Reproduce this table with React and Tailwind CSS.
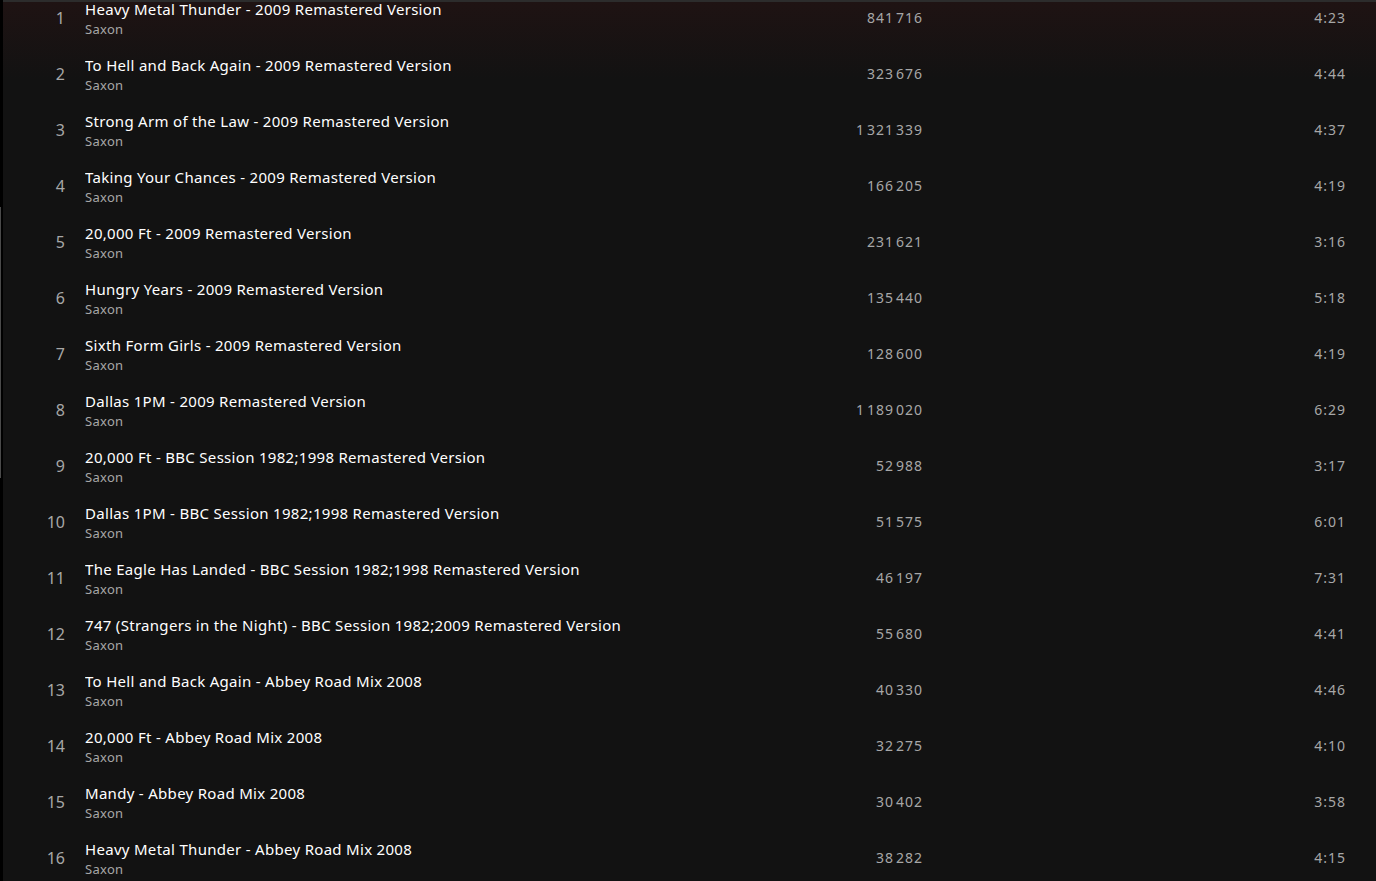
const tracks = [
  ["Heavy Metal Thunder - 2009 Remastered Version", ["841", "716"], "4:23"],
  ["To Hell and Back Again - 2009 Remastered Version", ["323", "676"], "4:44"],
  ["Strong Arm of the Law - 2009 Remastered Version", ["1", "321", "339"], "4:37"],
  ["Taking Your Chances - 2009 Remastered Version", ["166", "205"], "4:19"],
  ["20,000 Ft - 2009 Remastered Version", ["231", "621"], "3:16"],
  ["Hungry Years - 2009 Remastered Version", ["135", "440"], "5:18"],
  ["Sixth Form Girls - 2009 Remastered Version", ["128", "600"], "4:19"],
  ["Dallas 1PM - 2009 Remastered Version", ["1", "189", "020"], "6:29"],
  ["20,000 Ft - BBC Session 1982;1998 Remastered Version", ["52", "988"], "3:17"],
  ["Dallas 1PM - BBC Session 1982;1998 Remastered Version", ["51", "575"], "6:01"],
  ["The Eagle Has Landed - BBC Session 1982;1998 Remastered Version", ["46", "197"], "7:31"],
  ["747 (Strangers in the Night) - BBC Session 1982;2009 Remastered Version", ["55", "680"], "4:41"],
  ["To Hell and Back Again - Abbey Road Mix 2008", ["40", "330"], "4:46"],
  ["20,000 Ft - Abbey Road Mix 2008", ["32", "275"], "4:10"],
  ["Mandy - Abbey Road Mix 2008", ["30", "402"], "3:58"],
  ["Heavy Metal Thunder - Abbey Road Mix 2008", ["38", "282"], "4:15"],
];

export default function App() {
  return (
    <div
      className="flex h-[881px] w-[1376px] overflow-hidden bg-[#121212]"
      style={{ fontFamily: '"Noto Sans", "Liberation Sans", sans-serif' }}
    >
      <div className="flex w-[3px] shrink-0 flex-col bg-black">
        <div className="h-[207px]" />
        <div className="h-[271px] w-[1px] bg-[#4a4a4a]" />
      </div>
      <div className="flex min-w-0 flex-1 flex-col overflow-hidden bg-[linear-gradient(to_bottom,#1f1313_0px,#121212_80px)]">
        <div className="relative z-10 h-[2px] shrink-0 bg-[#2c2c2c]" />
        <div className="-mt-[12px] flex flex-col">
          {tracks.map(([title, plays, dur], i) => (
            <div
              key={i}
              className="grid h-[56px] shrink-0 grid-cols-[62px_minmax(0,1fr)_222px_423px] items-center pr-[30px]"
            >
              <div className="text-right text-[16px] text-[#a7a7a7]">{i + 1}</div>
              <div className="flex min-w-0 flex-col pl-[20px]">
                <div className="truncate text-[15px] leading-[20px] tracking-[0.3px] text-white">{title}</div>
                <div className="mt-[1px] truncate text-[13px] leading-[18px] tracking-[0.3px] text-[#a7a7a7]">Saxon</div>
              </div>
              <div className="mb-[2px] flex justify-end gap-[2px] text-[14px] tracking-[1px] text-[#a7a7a7]">
                {plays.map((g, k) => (
                  <span key={k}>{g}</span>
                ))}
              </div>
              <div className="mb-[2px] text-right text-[14px] tracking-[1px] text-[#a7a7a7] tabular-nums">{dur}</div>
            </div>
          ))}
        </div>
      </div>
    </div>
  );
}
